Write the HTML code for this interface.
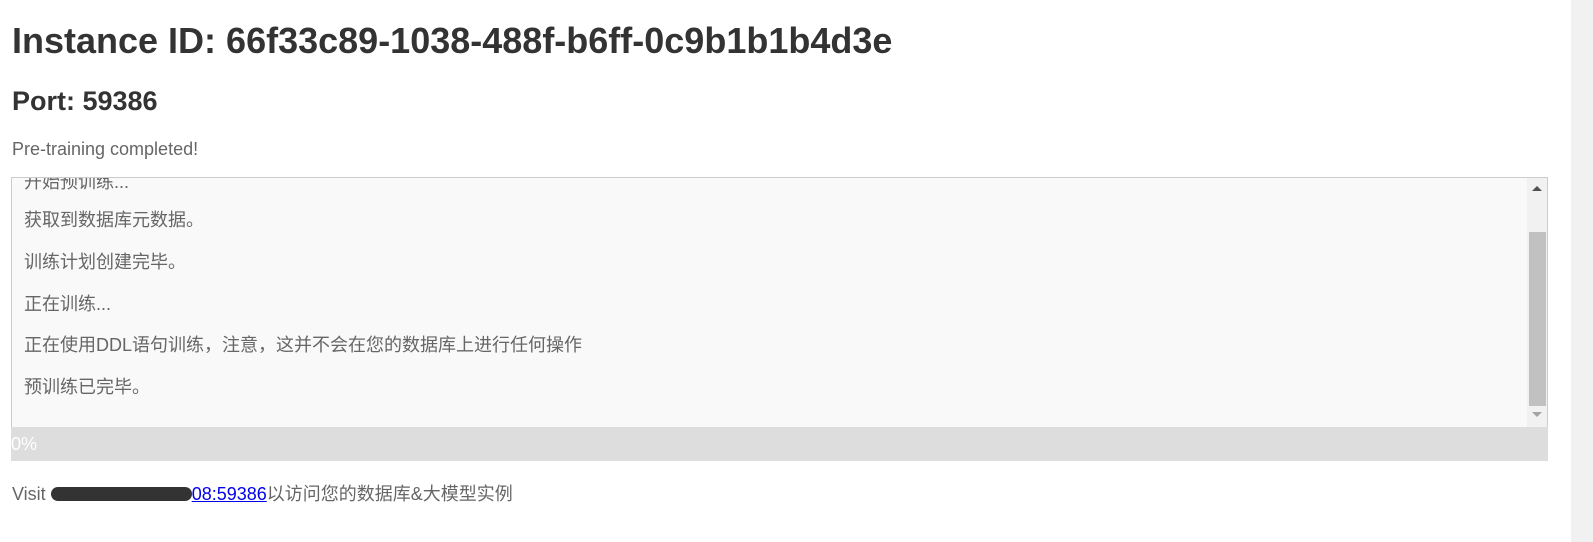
<!DOCTYPE html>
<html><head><meta charset="utf-8"><style>
body{margin:0;width:1593px;height:542px;overflow:hidden;background:#fff;font-family:"Liberation Sans","Noto Sans CJK SC",sans-serif;position:relative}
.pg{position:absolute;right:0;top:0;width:22px;height:542px;background:#f1f1f1}
h1{position:absolute;left:12px;top:20px;margin:0;font-size:36px;color:#333;font-weight:bold;white-space:nowrap}
h2{position:absolute;left:12px;top:86px;margin:0;font-size:27px;color:#333;font-weight:bold}
.st{position:absolute;left:12px;top:139px;font-size:18px;color:#666}
.box{position:absolute;left:11px;top:177px;width:1535px;height:249px;border:1px solid #ccc;background:#f9f9f9;overflow:hidden}
.box p{position:absolute;left:12px;margin:0;font-size:18px;color:#666;white-space:nowrap;line-height:22px}
.sb{position:absolute;right:0;top:0;width:20px;height:249px;background:#f1f1f1}
.th{position:absolute;left:2px;top:54px;width:17px;height:174px;background:#c1c1c1}
.up{position:absolute;left:5px;top:8px;border-left:5px solid transparent;border-right:5px solid transparent;border-bottom:5px solid #505050}
.dn{position:absolute;left:5px;top:234px;border-left:5px solid transparent;border-right:5px solid transparent;border-top:5px solid #a3a3a3}
.bar{position:absolute;left:11px;top:427px;width:1537px;height:34px;background:#ddd;color:#fff;font-size:18px;line-height:22px;padding-top:6px;box-sizing:border-box}
.v{position:absolute;left:12px;top:480px;font-size:18px;color:#666;white-space:nowrap}
.v a{color:#00e;text-decoration:underline}
.red{display:inline-block;width:141px;height:14px;vertical-align:-1px;background:#333;border-radius:8px}
</style></head><body>
<div class="pg"></div>
<h1>Instance ID: 66f33c89-1038-488f-b6ff-0c9b1b1b4d3e</h1>
<h2>Port: 59386</h2>
<div class="st">Pre-training completed!</div>
<div class="box">
<p style="top:-7px">开始预训练...</p>
<p style="top:31px">获取到数据库元数据。</p>
<p style="top:73px">训练计划创建完毕。</p>
<p style="top:115px">正在训练...</p>
<p style="top:156px">正在使用DDL语句训练，注意，这并不会在您的数据库上进行任何操作</p>
<p style="top:198px">预训练已完毕。</p>
<div class="sb"><div class="up"></div><div class="th"></div><div class="dn"></div></div>
</div>
<div class="bar">0%</div>
<div class="v">Visit <a><span class="red"></span>08:59386</a>以访问您的数据库&amp;大模型实例</div>
</body></html>
